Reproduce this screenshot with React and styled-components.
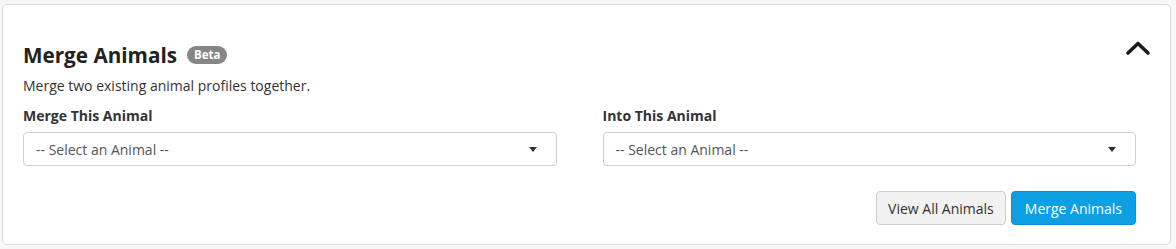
import styled, { createGlobalStyle } from "styled-components"

const GlobalStyle = createGlobalStyle`
    body {
        margin: 0;
        background: #f7f7f7;
        font-family: "Open Sans", "Liberation Sans", sans-serif;
        color: #222;
    }
`

const Card = styled.section`
    box-sizing: border-box;
    width: 1169px;
    height: 241px;
    margin: 4px 0 0 2px;
    padding: 36px 20px 24px 20px;
    background: #fff;
    border: 1px solid #dcdcdc;
    border-radius: 5px;
`

const Header = styled.div`
    display: flex;
    align-items: flex-start;
    justify-content: space-between;
`

const TitleRow = styled.div`
    display: flex;
    align-items: center;
    gap: 10px;
`

const Title = styled.h2`
    margin: 0;
    font-size: 20.7px;
    line-height: 28px;
    font-weight: 700;
    color: #222;
`

const Badge = styled.span`
    display: inline-flex;
    align-items: center;
    height: 18px;
    padding: 0 7px;
    border-radius: 9px;
    background: #868686;
    color: #fff;
    font-size: 11.5px;
    font-weight: 700;
    margin-top: -1px;
`

const Toggle = styled.button`
    display: flex;
    padding: 0;
    margin: -1px -1px 0 0;
    border: 0;
    background: none;
    cursor: pointer;
`

const Body = styled.div`
    padding-right: 14px;
`

const Description = styled.p`
    margin: 7px 0 0;
    font-size: 14px;
    line-height: 20px;
    color: #333;
`

const Fields = styled.div`
    display: grid;
    grid-template-columns: 1fr 1fr;
    column-gap: 46px;
    margin-top: 10px;
`

const Field = styled.div`
    display: flex;
    flex-direction: column;
    gap: 5px;
`

const Label = styled.label`
    font-size: 14px;
    line-height: 20px;
    font-weight: 700;
    color: #333;
`

const Select = styled.div`
    box-sizing: border-box;
    display: flex;
    align-items: center;
    justify-content: space-between;
    height: 34px;
    margin-top: 1px;
    padding: 0 19px 0 12px;
    border: 1px solid #cfcfcf;
    border-radius: 4px;
    font-size: 14px;
    color: #555;
    background: #fff;
`

const Caret = styled.span`
    width: 0;
    height: 0;
    border-left: 4.5px solid transparent;
    border-right: 4.5px solid transparent;
    border-top: 5px solid #333;
`

const Actions = styled.div`
    display: flex;
    justify-content: flex-end;
    gap: 5px;
    margin-top: 25px;
`

const Button = styled.button`
    box-sizing: border-box;
    height: 34px;
    padding: 0 ${p => p.$primary ? "13px" : "11px"};
    border-radius: 4px;
    font-family: inherit;
    font-size: 14px;
    cursor: pointer;
    border: 1px solid ${p => p.$primary ? "#0b8fd3" : "#cdcdcd"};
    background: ${p => p.$primary ? "#0d9fe4" : "#f1f1f1"};
    color: ${p => p.$primary ? "#fff" : "#333"};
`

const ChevronUp = () => (
    <svg width="26" height="16" viewBox="0 0 26 16">
        <polyline points="3,13 13,3.5 23,13" fill="none" stroke="#1a1a1a" strokeWidth="3.6" strokeLinecap="round" strokeLinejoin="round" />
    </svg>
)

const AnimalSelect = ({ label }) => (
    <Field>
        <Label>{label}</Label>
        <Select>
            <span>-- Select an Animal --</span>
            <Caret />
        </Select>
    </Field>
)

export default function App() {
    return (
        <>
            <GlobalStyle />
            <Card>
                <Header>
                    <TitleRow>
                        <Title>Merge Animals</Title>
                        <Badge>Beta</Badge>
                    </TitleRow>
                    <Toggle aria-label="Collapse"><ChevronUp /></Toggle>
                </Header>
                <Body>
                    <Description>Merge two existing animal profiles together.</Description>
                    <Fields>
                        <AnimalSelect label="Merge This Animal" />
                        <AnimalSelect label="Into This Animal" />
                    </Fields>
                    <Actions>
                        <Button>View All Animals</Button>
                        <Button $primary>Merge Animals</Button>
                    </Actions>
                </Body>
            </Card>
        </>
    )
}
